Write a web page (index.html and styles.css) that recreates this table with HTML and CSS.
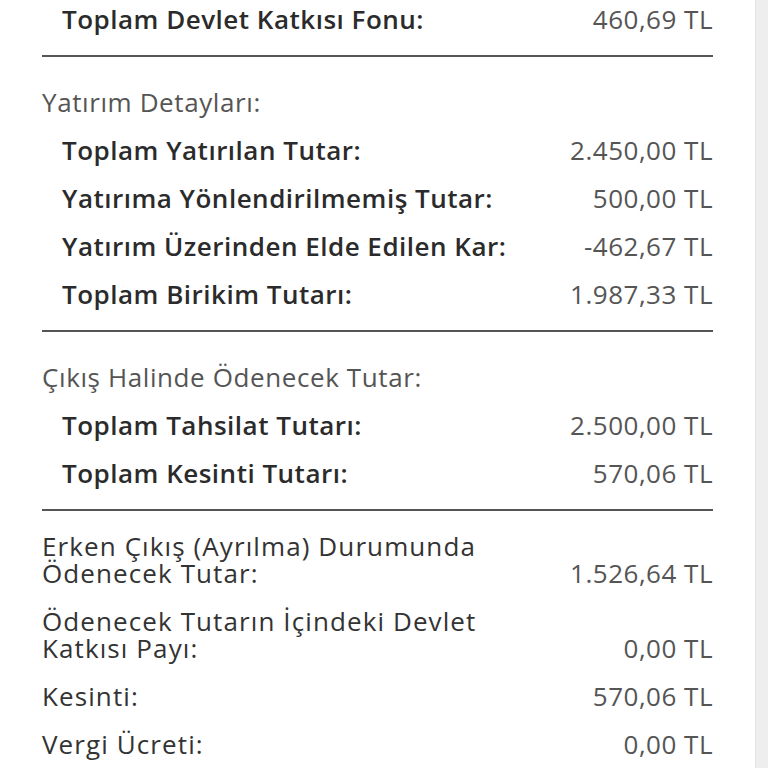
FILE: index.html
```html
<!DOCTYPE html>
<html lang="tr">
<head>
<meta charset="utf-8">
<link rel="stylesheet" href="styles.css">
</head>
<body>
<div class="page">
  <main class="panel">
    <section class="group group-top">
      <div class="row sub"><span class="label">Toplam Devlet Katkısı Fonu:</span><span class="value">460,69 TL</span></div>
    </section>
    <section class="group">
      <div class="heading">Yatırım Detayları:</div>
      <div class="row sub"><span class="label">Toplam Yatırılan Tutar:</span><span class="value">2.450,00 TL</span></div>
      <div class="row sub"><span class="label">Yatırıma Yönlendirilmemiş Tutar:</span><span class="value">500,00 TL</span></div>
      <div class="row sub"><span class="label">Yatırım Üzerinden Elde Edilen Kar:</span><span class="value">-462,67 TL</span></div>
      <div class="row sub"><span class="label">Toplam Birikim Tutarı:</span><span class="value">1.987,33 TL</span></div>
    </section>
    <section class="group">
      <div class="heading">Çıkış Halinde Ödenecek Tutar:</div>
      <div class="row sub"><span class="label">Toplam Tahsilat Tutarı:</span><span class="value">2.500,00 TL</span></div>
      <div class="row sub"><span class="label">Toplam Kesinti Tutarı:</span><span class="value">570,06 TL</span></div>
    </section>
    <section class="group group-last">
      <div class="row main"><span class="label">Erken Çıkış (Ayrılma) Durumunda Ödenecek Tutar:</span><span class="value">1.526,64 TL</span></div>
      <div class="row main"><span class="label">Ödenecek Tutarın İçindeki Devlet Katkısı Payı:</span><span class="value">0,00 TL</span></div>
      <div class="row main"><span class="label">Kesinti:</span><span class="value">570,06 TL</span></div>
      <div class="row main"><span class="label">Vergi Ücreti:</span><span class="value">0,00 TL</span></div>
    </section>
  </main>
  <aside class="side"></aside>
</div>
</body>
</html>
```

FILE: styles.css
```css
html, body {
  margin: 0;
  padding: 0;
  background: #ffffff;
}

body {
  font-family: "Open Sans", "DejaVu Sans", sans-serif;
  font-size: 26px;
  letter-spacing: 0.5px;
  color: #333333;
  overflow: hidden;
}

.page {
  display: flex;
  height: 768px;
}

.panel {
  width: 755px;
  flex: none;
  padding: 0 42px 0 42px;
  box-sizing: border-box;
  margin-top: -4px;
}

.side {
  flex: 1;
  background: #eeeeee;
  border-left: 1px solid #e4e4e4;
}

.group {
  border-bottom: 2px solid #555555;
  padding-bottom: 11px;
}

.group-top {
  padding-bottom: 11px;
}

.group-last {
  border-bottom: none;
  padding-top: 12px;
}

.heading {
  margin-top: 22px;
  padding: 10px 0 11px;
  line-height: 27px;
  color: #555555;
  letter-spacing: 0.6px;
}

.row {
  display: flex;
  justify-content: space-between;
  align-items: flex-end;
  padding: 10px 0 11px;
  line-height: 27px;
}

.row.sub {
  padding-left: 20px;
}

.row.sub .label {
  font-weight: 600;
  color: #2b2b2b;
}

.row.main .label {
  color: #333333;
  max-width: 460px;
  letter-spacing: 1.1px;
}

.value {
  color: #555555;
  white-space: nowrap;
}
```
